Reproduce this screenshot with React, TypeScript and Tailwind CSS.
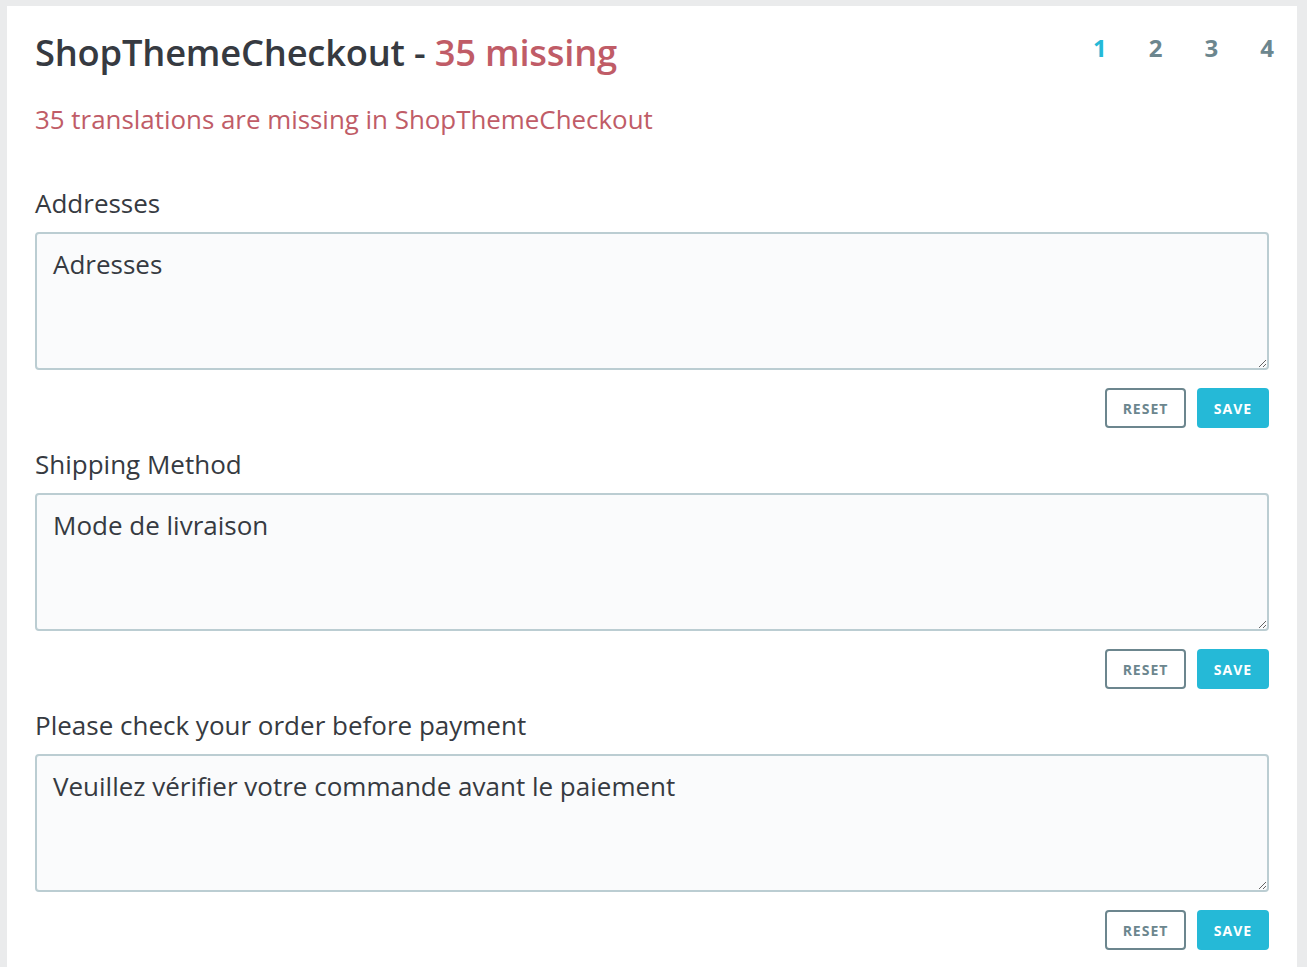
import React from "react";

const sections = [
  { label: "Addresses", value: "Adresses" },
  { label: "Shipping Method", value: "Mode de livraison" },
  { label: "Please check your order before payment", value: "Veuillez vérifier votre commande avant le paiement" },
];

export default function App() {
  return (
    <div className="min-h-[967px] bg-[#eaebec] pl-[7px] pr-[10px] pt-[6px] font-['Open_Sans',sans-serif]">
      <div className="min-h-[961px] bg-white pl-[28px] pr-[28px] pt-[21px]">
        <div className="flex items-start justify-between">
          <h1 className="text-[36.3px] font-semibold leading-[50px] text-[#363a41] tracking-[-0.2px]">
            ShopThemeCheckout - <span className="text-[#c05c67]">35 missing</span>
          </h1>
          <div className="-mr-[5px] mt-[1px] flex gap-[42px] text-[24px] font-bold leading-[40px] text-[#6c868e]">
            <span className="text-[#25b9d7]">1</span>
            <span>2</span>
            <span>3</span>
            <span>4</span>
          </div>
        </div>
        <p className="mt-[24px] text-[25.9px] leading-[36px] text-[#c05c67]">
          35 translations are missing in ShopThemeCheckout
        </p>
        <div className="mt-[48px] flex flex-col">
          {sections.map((s, i) => (
            <div key={i} className="flex flex-col">
              <label className="text-[26px] leading-[36px] text-[#363a41]">{s.label}</label>
              <textarea
                defaultValue={s.value}
                className="mt-[11px] h-[138px] w-full rounded-[4px] border-2 border-[#bbcdd2] bg-[#fafbfc] px-[16px] pt-[12px] text-[26px] leading-[36px] text-[#363a41] outline-none"
              />
              <div className="mt-[18px] mb-[18px] flex justify-end gap-[11px]">
                <button className="h-[40px] w-[81px] rounded-[4px] border-2 border-[#6c868e] bg-white text-[14px] font-bold tracking-[1px] text-[#6c868e]">
                  RESET
                </button>
                <button className="h-[40px] w-[72px] rounded-[4px] bg-[#25b9d7] text-[14px] font-bold tracking-[1px] text-white">
                  SAVE
                </button>
              </div>
            </div>
          ))}
        </div>
      </div>
    </div>
  );
}
